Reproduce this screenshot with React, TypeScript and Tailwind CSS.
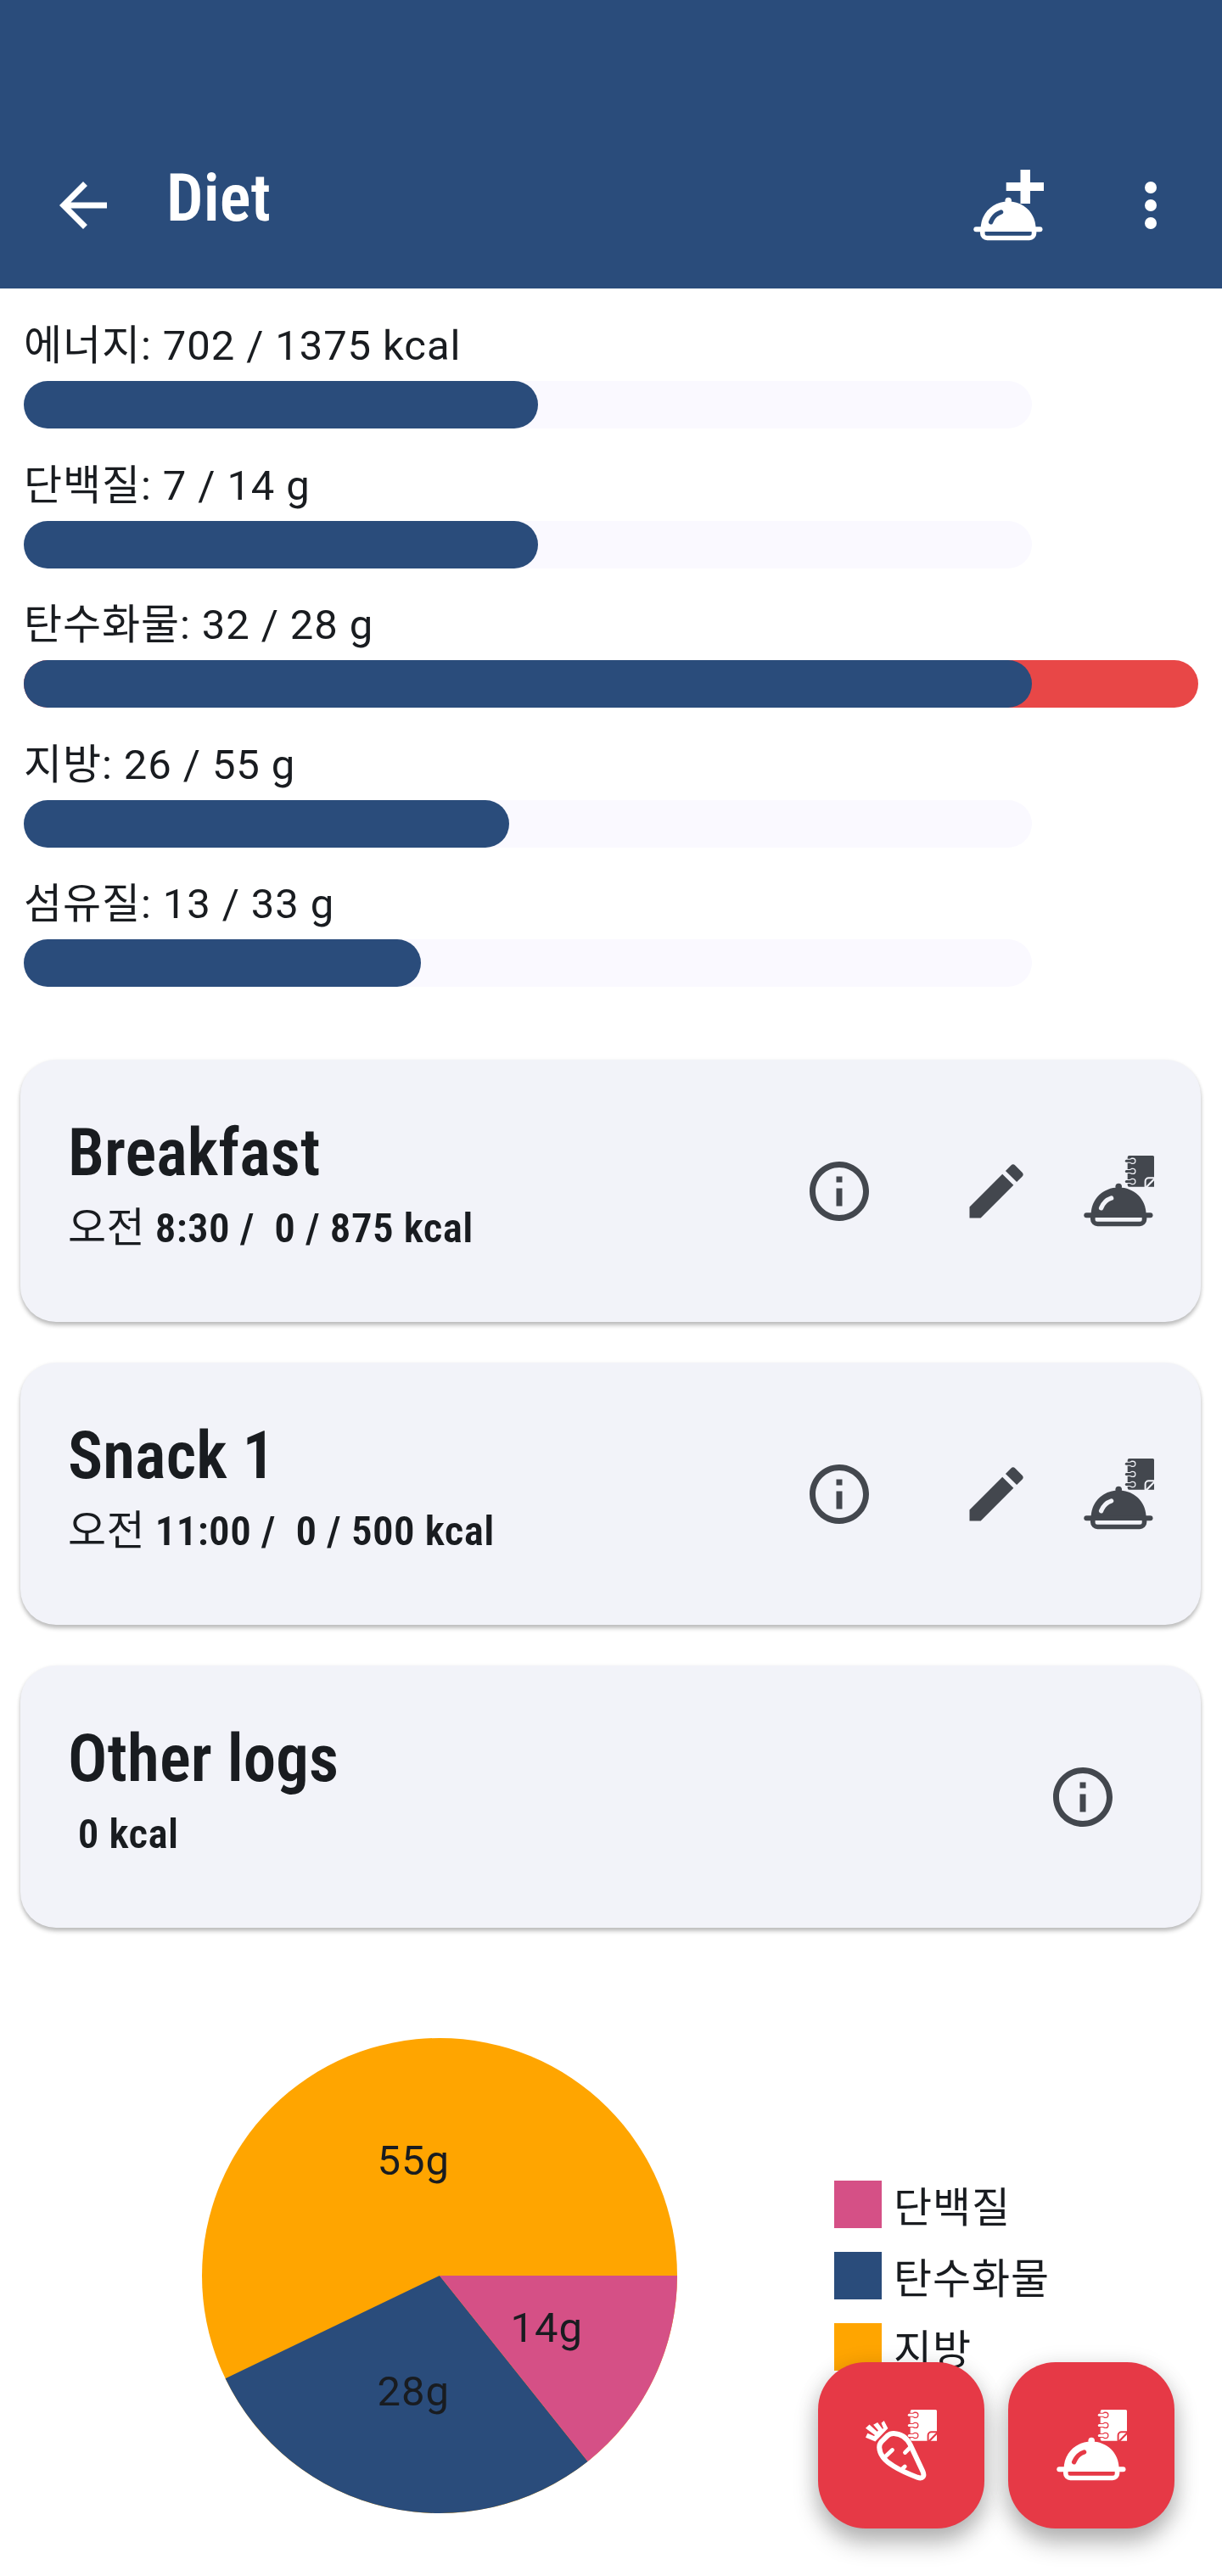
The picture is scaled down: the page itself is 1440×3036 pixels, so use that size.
import type { ReactNode } from "react";
import { MdArrowBack, MdEdit, MdInfoOutline } from "react-icons/md";

const NAVY = "#2a4c7b";

type Nutrient = { label: string; filled: number; over?: boolean };

const nutrients: Nutrient[] = [
  { label: "에너지: 702 / 1375 kcal", filled: 606 },
  { label: "단백질: 7 / 14 g", filled: 606 },
  { label: "탄수화물: 32 / 28 g", filled: 1188, over: true },
  { label: "지방: 26 / 55 g", filled: 572 },
  { label: "섬유질: 13 / 33 g", filled: 468 },
];

/* Serving dish with a domed lid; `cut` is the colour behind the icon. */
function Cloche({ cut }: { cut: string }) {
  return (
    <g>
      <circle cx="42.2" cy="37.6" r="3.8" />
      <path d="M9.6 71C9.6 52 24 38.6 42.2 38.6S74.6 52 74.6 71Z" />
      <rect x="1.3" y="68.3" width="81.2" height="6" rx="3" />
      <path d="M9 71H75.300V76A8.300 8.300 0 0 1 67 84.300H17.300A8.300 8.300 0 0 1 9 76Z" />
      <path d="M14.600 74H69.700V76.300A2.500 2.500 0 0 1 67.200 78.800H17.100A2.500 2.500 0 0 1 14.600 76.300Z" fill={cut} />
      <path d="M21.600 62.800C23.600 57.500 27.600 53 33.600 51" fill="none" stroke={cut} strokeWidth="5.400" strokeLinecap="round" />
    </g>
  );
}

/* Spiral notebook with a folded corner. */
function Notebook({ cut }: { cut: string }) {
  return (
    <g>
      <path d="M54.700 1H82.500A1.500 1.500 0 0 1 84 2.500V37.700H54.700A2 2 0 0 1 52.700 35.700V3A2 2 0 0 1 54.700 1Z" />
      {[7.3, 19.4, 31.5].map((y) => (
        <g key={y}>
          <path
            d={`M52 ${y - 2.5}H55.500L57.500 ${y - 3.7}H58.800A3.700 3.700 0 0 1 58.800 ${y + 3.7}H57.500L55.500 ${y + 2.5}H52Z`}
            fill={cut}
          />
          <path d={`M51.300 ${y}H58`} fill="none" stroke="currentColor" strokeWidth="3" strokeLinecap="round" />
          <rect x="56" y={y - 2.4} width="5.200" height="4.800" rx="2.200" />
        </g>
      ))}
      <path d="M73.600 38V31.300A4 4 0 0 1 77.600 27.300H84.500" fill="none" stroke={cut} strokeWidth="2" />
      <path d="M74.500 38.500L84.500 28.200" fill="none" stroke={cut} strokeWidth="2.200" />
    </g>
  );
}

function Carrot({ cut }: { cut: string }) {
  return (
    <g>
      <path
        d="M33.300 28.900C41 29.300 48 33 52.500 42L67.300 73.500C70 79.500 67.500 83 61 80.700C50 76.500 41 72.500 33 67.500C22 61 16.500 54 16.200 45.500C16.200 42.500 17 40.500 19 38.300L26 31.500C28.500 29.200 30.500 28.800 33.300 28.900Z"
        fill={cut}
        stroke="currentColor"
        strokeWidth="6"
        strokeLinejoin="round"
      />
      <path
        d="M31.500 48.500L23 56.500M46.500 51.500L53 45M46.200 68L42.500 71.500"
        fill="none"
        stroke="currentColor"
        strokeWidth="4.800"
        strokeLinecap="round"
      />
      <path d="M21.700 14.100L26.400 23L11.400 38.600L0 33.700L2.300 28.700L10 32L11 31L0 22.700L4.500 18.400L13.600 26.700L15 25.500L9.100 18.700L14.100 16.100L20 23.800L21 23L18.500 16.700Z" />
    </g>
  );
}

function Icon({ children, className = "" }: { children: ReactNode; className?: string }) {
  return (
    <svg viewBox="0 1 84 84" fill="currentColor" className={`h-[84px] w-[84px] shrink-0 overflow-visible ${className}`}>
      {children}
    </svg>
  );
}

function NutrientBar({ label, filled, over }: Nutrient) {
  return (
    <div className="h-[164.5px]">
      <p className="h-[70px] whitespace-pre text-[49px] leading-[70px] tracking-[0.9px]">{label}</p>
      <div className="mt-[6px] grid h-14 w-[1384px]">
        <div className="col-start-1 row-start-1 w-[1188px] rounded-full bg-[#faf9ff]" />
        {over && <div className="col-start-1 row-start-1 rounded-full bg-[#e84747]" />}
        <div className="col-start-1 row-start-1 rounded-full bg-[#2a4c7b]" style={{ width: filled }} />
      </div>
    </div>
  );
}

function MealCard({ title, children, actions }: { title: string; children: ReactNode; actions: ReactNode }) {
  return (
    <section className="flex h-[309px] items-center rounded-[42px] bg-[#f2f3f9] pl-14 shadow-[0_4px_5px_rgba(0,0,0,0.24),0_1px_5px_rgba(0,0,0,0.06)]">
      <div className="h-[309px] flex-1 pt-[65px]">
        <h2 className="h-[99px] font-['Roboto_Condensed','Roboto'] text-[77px] leading-[90px] font-semibold tracking-[0.1px] [font-stretch:75%]">{title}</h2>
        <p className="h-[70px] whitespace-pre font-['Roboto_Condensed','Roboto','Noto_Sans_CJK_KR'] text-[49px] leading-[70px] font-semibold tracking-[0.4px] [font-stretch:75%]">
          {children}
        </p>
      </div>
      <div className="flex items-center text-[#43474e]">{actions}</div>
    </section>
  );
}

const mealActions = (
  <>
    <MdInfoOutline size={84} className="mr-[101px]" />
    <MdEdit size={84} className="mr-[60px]" />
    <Icon className="mt-px mr-[55.5px]">
      <Notebook cut="#f2f3f9" />
      <Cloche cut="#f2f3f9" />
    </Icon>
  </>
);

function Fab({ children }: { children: ReactNode }) {
  return (
    <button className="flex h-[196px] w-[196px] items-center justify-center rounded-[56px] bg-[#e63946] text-white shadow-[0_16px_28px_rgba(0,0,0,0.29),0_2px_28px_rgba(0,0,0,0.08)]">
      <Icon>{children}</Icon>
    </button>
  );
}

export default function App() {
  return (
    <div className="relative h-[3036px] w-[1440px] overflow-hidden bg-white font-['Roboto','Noto_Sans_CJK_KR',sans-serif] text-[#191c20]">
      <header className="flex h-[340px] bg-[#2a4c7b] pt-[200px] pl-14 text-white">
        <MdArrowBack size={84} />
        <h1 className="-mt-[11px] ml-[56px] flex-1 font-['Roboto_Condensed','Roboto'] text-[77px] leading-[90px] font-semibold tracking-[0.1px] [font-stretch:75%]">
          Diet
        </h1>
        <Icon className="mr-[84px]">
          <path d="M56.500 1H68V16H84V26H68V41H56.500V26H39.700V16H56.500Z" />
          <Cloche cut={NAVY} />
        </Icon>
        <Icon className="mr-[42px]">
          <circle cx="42" cy="22" r="7" />
          <circle cx="42" cy="43" r="7" />
          <circle cx="42" cy="64" r="7" />
        </Icon>
      </header>

      <section className="h-[909px] px-7 pt-[33px]">
        {nutrients.map((n) => (
          <NutrientBar key={n.label} {...n} />
        ))}
      </section>

      <main className="flex flex-col gap-12 pr-[25px] pl-6">
        <MealCard title="Breakfast" actions={mealActions}>
          <span className="font-normal">오전</span> 8:30 /{"  "}0 / 875 kcal
        </MealCard>
        <MealCard title="Snack 1" actions={mealActions}>
          <span className="font-normal">오전</span> 11:00 /{"  "}0 / 500 kcal
        </MealCard>
        <MealCard title="Other logs" actions={<MdInfoOutline size={84} className="mr-[97px]" />}>
          {" "}0 kcal
        </MealCard>
      </main>

      <section className="flex pt-[130px] pl-[238px]">
        <svg width="560" height="560" viewBox="-280 -280 560 560" className="shrink-0 text-[49px] tracking-[0.9px]">
          <circle r="280" fill="#ffa500" />
          <path d="M0 0L174.600 218.900A280 280 0 0 1 -252.400 121.200Z" fill={NAVY} />
          <path d="M0 0H280A280 280 0 0 1 174.600 218.900Z" fill="#d55086" />
          <g fill="#191c20">
            <text x="83.500" y="78">14g</text>
            <text x="-73.500" y="153">28g</text>
            <text x="-73.500" y="-119">55g</text>
          </g>
        </svg>
        <ul className="ml-[185px] flex flex-col gap-7 pt-[168px] text-[49px] leading-[66px] tracking-[0.9px]">
          <li className="flex h-14 gap-[14px]"><span className="w-14 bg-[#d55086]" />단백질</li>
          <li className="flex h-14 gap-[14px]"><span className="w-14 bg-[#2a4c7b]" />탄수화물</li>
          <li className="flex h-14 gap-[14px]"><span className="w-14 bg-[#ffa500]" />지방</li>
        </ul>
      </section>

      <div className="absolute right-14 bottom-14 flex gap-7">
        <Fab>
          <Notebook cut="#e63946" />
          <Carrot cut="#e63946" />
        </Fab>
        <Fab>
          <Notebook cut="#e63946" />
          <Cloche cut="#e63946" />
        </Fab>
      </div>
    </div>
  );
}
